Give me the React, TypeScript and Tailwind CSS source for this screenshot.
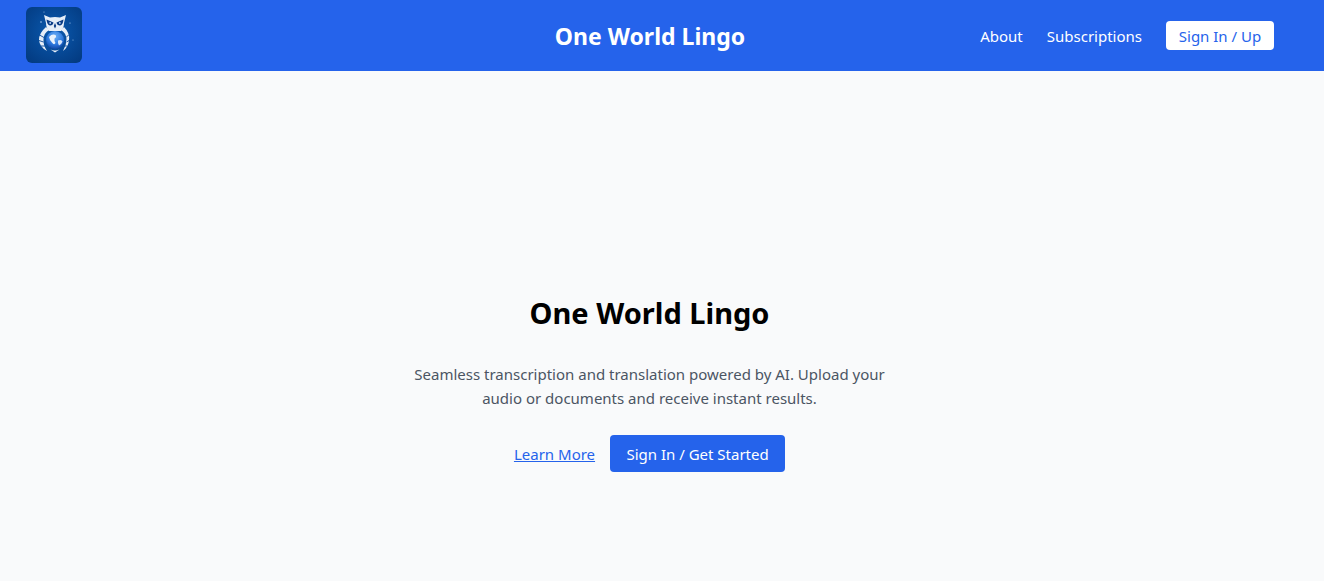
export default function App() {
  return (
    <div className="min-h-[581px] bg-[#f9fafb] flex flex-col font-['Noto_Sans','Open_Sans',sans-serif]">
      <header className="h-[71px] bg-[#2563eb]">
        <div className="w-[1299px] h-[71px] grid grid-cols-[1fr_auto_1fr] items-center pl-[26px] pr-[25px]">
          <div className="w-14 h-14 rounded-md overflow-hidden -mt-px">
            <svg viewBox="0 0 56 56" className="w-14 h-14 block">
              <defs>
                <radialGradient id="bgl" cx="50%" cy="45%" r="70%">
                  <stop offset="0%" stopColor="#0a5ab0" />
                  <stop offset="100%" stopColor="#033a80" />
                </radialGradient>
                <radialGradient id="globe" cx="50%" cy="30%" r="75%">
                  <stop offset="0%" stopColor="#6fb2f7" />
                  <stop offset="60%" stopColor="#2a76dc" />
                  <stop offset="100%" stopColor="#0e3f9c" />
                </radialGradient>
              </defs>
              <rect width="56" height="56" fill="url(#bgl)" />
              <path d="M18 8 L24 10.5 Q29 9.5 34 10.5 L40 8 L38 16 Q38 21 35 24 L23 24 Q20 21 20 16 Z" fill="#e6eef8" />
              <path d="M20.5 12.5 L27.5 15.5 Q27 18.5 24 18.5 Q21 18 20.5 12.5 Z" fill="#0a3c86" />
              <path d="M37.5 12.5 L30.5 15.5 Q31 18.5 34 18.5 Q37 18 37.5 12.5 Z" fill="#0a3c86" />
              <circle cx="24.2" cy="16" r="0.9" fill="#bcd8f7" />
              <circle cx="33.8" cy="16" r="0.9" fill="#bcd8f7" />
              <path d="M29 16 L27.8 19 L29 21.5 L30.2 19 Z" fill="#0a3c86" />
              <path d="M20 20 Q13 26 13 33 Q13.5 40 21 44 Q17 38 17.5 32 Q18 26 23 23 Z" fill="#e6eef8" />
              <path d="M38 20 Q44 26 43 33 Q42.5 40 37 44 Q40.5 38 40.5 32 Q40 26 35 23 Z" fill="#e6eef8" />
              <path d="M13.5 28 L18 30.5 M13 33.5 L17.5 35 M15 39 L19 39 M42.5 28 L40 30.5 M43 33.5 L40.5 35 M41.5 39 L38.5 39" stroke="#0a4a9a" strokeWidth="0.9" />
              <circle cx="29" cy="33" r="9" fill="url(#globe)" />
              <path d="M23 30 Q26 26.5 29.5 28 Q31 30 28.5 31.5 Q28 34 29.5 36 Q28 38.5 26 35.5 Q23.5 33 23 30 Z" fill="#e8f2fc" />
              <path d="M32 33.5 Q35.5 32 36.5 34.5 Q35.5 37.5 33 38.5 Q31.5 36 32 33.5 Z" fill="#d5e6fa" />
              <path d="M24.5 42.5 Q29 44.5 33.5 42.5 L29 45.5 Z" fill="#e6eef8" />
              <circle cx="15" cy="15" r="0.8" fill="#a9cbf2" />
              <circle cx="44" cy="16" r="0.6" fill="#a9cbf2" />
              <circle cx="47" cy="33" r="0.5" fill="#a9cbf2" />
              <circle cx="18" cy="5" r="0.5" fill="#a9cbf2" />
            </svg>
          </div>
          <span className="text-[23px] font-bold text-white pt-[2px]">One World Lingo</span>
          <nav className="flex items-center justify-end gap-6 text-white text-[15px]">
            <a className="pt-px">About</a>
            <a className="pt-px">Subscriptions</a>
            <a className="bg-white text-[#2563eb] rounded w-[108px] h-[29px] pt-px flex items-center justify-center">Sign In / Up</a>
          </nav>
        </div>
      </header>
      <main className="w-[1299px] flex-1 flex flex-col items-center pt-[224px]">
        <h1 className="text-[29px] font-bold text-black leading-9">One World Lingo</h1>
        <p className="mt-[31px] w-[512px] text-center text-[15px] leading-6 text-[#4b5563]">
          Seamless transcription and translation powered by AI. Upload your audio or documents and receive instant results.
        </p>
        <div className="mt-[25px] flex items-center gap-[15px] text-[15px]">
          <a className="underline text-[#2563eb] pt-px">Learn More</a>
          <button className="bg-[#2563eb] text-white rounded w-[175px] h-[37px] pt-px">Sign In / Get Started</button>
        </div>
      </main>
    </div>
  );
}
